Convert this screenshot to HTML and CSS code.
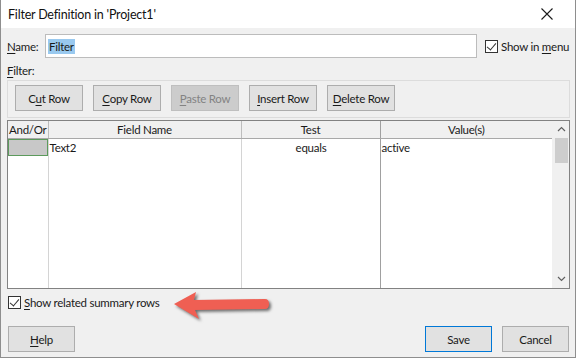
FILE: index.html
```html
<!DOCTYPE html>
<html lang="en">

<head>
    <link rel="stylesheet" href="styles.css">
</head>

<body>
    <div class="dialog">
        <div class="titlebar">
            <span class="title">Filter Definition in 'Project1'</span>
            <svg class="close-icon" width="12" height="12" viewBox="0 0 12 12">
                <path d="M0.5 0.5 L11.5 11.5 M11.5 0.5 L0.5 11.5" stroke="#1a1a1a" stroke-width="1.1" fill="none" />
            </svg>
        </div>

        <div class="content">
            <div class="name-row">
                <label class="name-label"><u>N</u>ame:</label>
                <div class="name-input"><span class="selected-text">Filter</span></div>
                <div class="check-option">
                    <span class="checkbox checked"></span>
                    <span>Show in <u>m</u>enu</span>
                </div>
            </div>

            <div class="filter-label"><u>F</u>ilter:</div>

            <div class="button-group">
                <button class="row-button">C<u>u</u>t Row</button>
                <button class="row-button"><u>C</u>opy Row</button>
                <button class="row-button disabled"><u>P</u>aste Row</button>
                <button class="row-button"><u>I</u>nsert Row</button>
                <button class="row-button"><u>D</u>elete Row</button>
            </div>

            <div class="grid">
                <table>
                    <colgroup>
                        <col class="col-andor">
                        <col class="col-field">
                        <col class="col-test">
                        <col class="col-value">
                    </colgroup>
                    <thead>
                        <tr>
                            <th>And/Or</th>
                            <th>Field Name</th>
                            <th>Test</th>
                            <th class="value-col">Value(s)</th>
                        </tr>
                    </thead>
                    <tbody>
                        <tr class="data-row">
                            <td class="current-cell"></td>
                            <td>Text2</td>
                            <td class="center">equals</td>
                            <td class="value-col">active</td>
                        </tr>
                        <tr class="filler-row">
                            <td></td>
                            <td></td>
                            <td></td>
                            <td class="value-col"></td>
                        </tr>
                    </tbody>
                </table>
                <div class="scrollbar">
                    <svg class="scroll-arrow" width="9" height="6" viewBox="0 0 9 6">
                        <path d="M1 5 L4.5 1.5 L8 5" stroke="#606060" stroke-width="1.2" fill="none" />
                    </svg>
                    <div class="scroll-thumb"></div>
                    <div class="scroll-track"></div>
                    <svg class="scroll-arrow" width="9" height="6" viewBox="0 0 9 6">
                        <path d="M1 1 L4.5 4.5 L8 1" stroke="#606060" stroke-width="1.2" fill="none" />
                    </svg>
                </div>
            </div>

            <div class="summary-row">
                <span class="checkbox checked"></span>
                <span><u>S</u>how related summary rows</span>
            </div>

            <div class="footer">
                <button class="dialog-button"><u>H</u>elp</button>
                <div class="footer-right">
                    <button class="dialog-button default">Save</button>
                    <button class="dialog-button">Cancel</button>
                </div>
            </div>
        </div>

        <svg class="annotation-arrow" width="104" height="36" viewBox="0 0 104 36">
            <path d="M3 16 L25 4 L23 12 L94 11 Q98 11 98 16 Q98 21 94 21 L24 22 L28 31 Z" fill="#ef5f53" />
        </svg>
    </div>
</body>

</html>
```

FILE: styles.css
```css
body {
    margin: 0;
    padding: 0;
    background-color: #fff;
    font-family: Lato, "Noto Sans", sans-serif;
    font-size: 11.5px;
    letter-spacing: -0.25px;
    color: #1a1a1a;
}

u {
    text-decoration-thickness: 1px;
    text-underline-offset: 2px;
}

.dialog {
    position: relative;
    width: 576px;
    height: 358px;
    box-sizing: border-box;
    background-color: #f0f0f0;
    border: 1px solid #8e8e8e;
    border-top: none;
    display: flex;
    flex-direction: column;
}

.titlebar {
    height: 28px;
    background-color: #fff;
    display: flex;
    align-items: center;
    justify-content: space-between;
    padding: 0 22px 0 7px;
}

.title {
    font-size: 12.5px;
    letter-spacing: -0.2px;
    color: #111;
}

.content {
    padding: 0 5px 0 6px;
    display: flex;
    flex-direction: column;
}

.name-row {
    display: flex;
    align-items: center;
    margin-top: 6px;
    height: 24px;
    white-space: nowrap;
}

.name-label {
    width: 38px;
}

.name-input {
    width: 432px;
    flex-shrink: 0;
    height: 24px;
    box-sizing: border-box;
    background-color: #fff;
    border: 1px solid #bcbcbc;
    display: flex;
    align-items: center;
    padding-left: 2px;
}

.selected-text {
    background-color: #99c9ef;
    padding: 0 1px;
    line-height: 15px;
}

.check-option {
    display: flex;
    align-items: center;
    gap: 3px;
    margin-left: 8px;
}

.checkbox {
    width: 13px;
    height: 13px;
    box-sizing: border-box;
    border: 1px solid #333;
    background-color: #fff;
    position: relative;
    flex-shrink: 0;
}

.checkbox.checked::after {
    content: "";
    position: absolute;
    left: 3px;
    top: 0px;
    width: 4px;
    height: 8px;
    border-right: 1px solid #333;
    border-bottom: 1px solid #333;
    transform: rotate(40deg);
}

.filter-label {
    margin-top: 4px;
    height: 18px;
    line-height: 18px;
}

.button-group {
    height: 38px;
    box-sizing: border-box;
    border: 1px solid #dcdcdc;
    padding: 4px 7px;
    display: flex;
    gap: 10px;
    width: 563px;
}

.row-button,
.dialog-button {
    height: 26px;
    width: 68px;
    background-color: #e1e1e1;
    border: 1px solid #adadad;
    font-family: Lato, "Noto Sans", sans-serif;
    font-size: 11.5px;
    letter-spacing: -0.25px;
    color: #1a1a1a;
    padding: 0;
}

.row-button.disabled {
    background-color: #cccccc;
    border-color: #bfbfbf;
    color: #838383;
}

.grid {
    margin-top: 2px;
    width: 563px;
    height: 169px;
    box-sizing: border-box;
    border: 1px solid #828282;
    background-color: #fff;
    display: flex;
}

table {
    flex: 1;
    height: 100%;
    border-collapse: collapse;
    table-layout: fixed;
}

.col-andor {
    width: 40px;
}

.col-field {
    width: 193px;
}

.col-test {
    width: 139px;
}

th {
    height: 17px;
    background-color: #f0f0f0;
    font-weight: normal;
    padding: 0;
    border-right: 1px solid #bdbdbd;
    border-bottom: 1px solid #a8a8a8;
    line-height: 16px;
}

td {
    padding: 0 0 0 1px;
    border-right: 1px solid #d4d4d4;
    line-height: 16px;
    white-space: nowrap;
}

.data-row td {
    height: 17px;
}

.center {
    text-align: center;
}

.value-col {
    border-right: none;
}

th:nth-child(3),
td:nth-child(3) {
    border-right-color: #a0a0a0;
}

.current-cell {
    background-color: #c8c8c8;
    outline: 1px solid #5c9a5c;
    outline-offset: -1px;
}

.filler-row td {
    height: auto;
}

.scrollbar {
    width: 16px;
    border-left: 1px solid #f0f0f0;
    background-color: #f0f0f0;
    display: flex;
    flex-direction: column;
    align-items: center;
}

.scroll-arrow {
    margin: 5px 0 6px;
}

.scroll-thumb {
    width: 13px;
    height: 25px;
    background-color: #cdcdcd;
}

.scroll-track {
    flex: 1;
}

.summary-row {
    display: flex;
    align-items: center;
    gap: 3px;
    margin-top: 7px;
    height: 13px;
    padding-left: 1px;
}

.footer {
    display: flex;
    justify-content: space-between;
    margin-top: 17px;
    padding-left: 1px;
    padding-right: 1px;
}

.footer-right {
    display: flex;
    gap: 10px;
}

.dialog-button {
    width: 67px;
}

.dialog-button.default {
    border-color: #0078d7;
}

.annotation-arrow {
    position: absolute;
    left: 170px;
    top: 288px;
    filter: drop-shadow(2px 2px 1.5px rgba(0, 0, 0, 0.55));
}
```
